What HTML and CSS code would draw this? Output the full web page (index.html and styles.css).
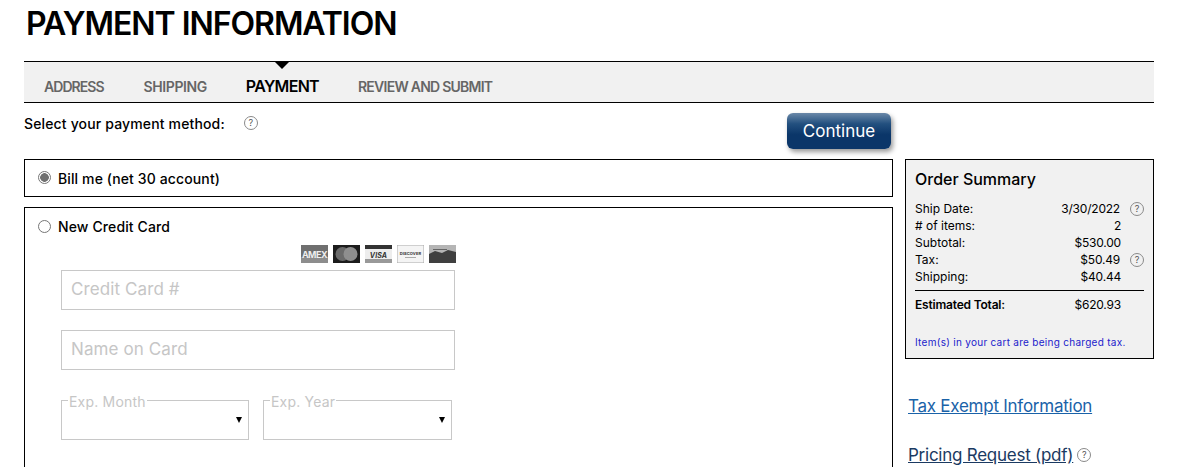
FILE: index.html
```html
<!DOCTYPE html>
<html>
<head>
    <meta charset="utf-8">
    <title>Payment Information</title>
    <link rel="stylesheet" href="styles.css">
</head>
<body>
    <div class="page">
        <h1 class="title">PAYMENT INFORMATION</h1>

        <ul class="steps">
            <li class="step step-address">ADDRESS</li>
            <li class="step step-shipping">SHIPPING</li>
            <li class="step step-current">PAYMENT</li>
            <li class="step step-review">REVIEW AND SUBMIT</li>
        </ul>

        <div class="method-row">
            <div class="method-label">
                <span>Select your payment method:</span>
                <span class="help">?</span>
            </div>
            <button class="continue" type="button">Continue</button>
        </div>

        <div class="columns">
            <div class="main">
                <label class="option option-bill">
                    <input class="radio" type="radio" name="method" checked>
                    <span class="bill-text">Bill me (net 30 account)</span>
                </label>

                <div class="option option-card">
                    <label class="card-head">
                        <input class="radio" type="radio" name="method">
                        <span>New Credit Card</span>
                    </label>

                    <div class="card-form">
                        <div class="card-logos">
                            <svg class="logo" viewBox="0 0 27 18">
                                <rect width="27" height="18" fill="#6f6f6f"/>
                                <rect y="12" width="27" height="6" fill="#8d8d8d"/>
                                <text x="13.5" y="12.5" class="logo-text amex">AMEX</text>
                            </svg>
                            <svg class="logo" viewBox="0 0 27 18">
                                <rect width="27" height="18" fill="#1c1c1c"/>
                                <circle cx="9.5" cy="9" r="7" fill="#6a6a6a"/>
                                <circle cx="17.5" cy="9" r="7" fill="#8e8e8e"/>
                            </svg>
                            <svg class="logo" viewBox="0 0 27 18">
                                <rect width="27" height="18" fill="#ededed"/>
                                <rect width="27" height="4" fill="#333"/>
                                <rect y="14" width="27" height="4" fill="#999"/>
                                <text x="13.5" y="12.5" class="logo-text visa">VISA</text>
                            </svg>
                            <svg class="logo" viewBox="0 0 27 18">
                                <rect width="27" height="18" fill="#f4f4f4" stroke="#aaa"/>
                                <text x="13.5" y="10" class="logo-text discover">DISCOVER</text>
                                <rect x="8" y="12" width="11" height="1" fill="#aaa"/>
                            </svg>
                            <svg class="logo" viewBox="0 0 27 18">
                                <rect width="27" height="18" fill="#3f3f3f"/>
                                <path d="M0 0h27v7l-8-2-6 3-7-2-6 3z" fill="#b5b5b5"/>
                                <rect x="4" y="4" width="14" height="1" fill="#666"/>
                            </svg>
                        </div>

                        <input class="field" type="text" placeholder="Credit Card #">
                        <input class="field" type="text" placeholder="Name on Card">

                        <div class="expiry">
                            <div class="select-box select-month">
                                <span class="select-label">Exp. Month</span>
                                <span class="select-arrow"></span>
                            </div>
                            <div class="select-box select-year">
                                <span class="select-label">Exp. Year</span>
                                <span class="select-arrow"></span>
                            </div>
                        </div>
                    </div>
                </div>
            </div>

            <div class="side">
                <div class="summary">
                    <h2 class="summary-title">Order Summary</h2>
                    <div class="summary-row"><span>Ship Date:</span><span class="amount">3/30/2022</span><span class="help">?</span></div>
                    <div class="summary-row"><span># of items:</span><span class="amount">2</span></div>
                    <div class="summary-row"><span>Subtotal:</span><span class="amount">$530.00</span></div>
                    <div class="summary-row"><span>Tax:</span><span class="amount">$50.49</span><span class="help">?</span></div>
                    <div class="summary-row"><span>Shipping:</span><span class="amount">$40.44</span></div>
                    <div class="summary-row summary-total"><span>Estimated Total:</span><span class="amount">$620.93</span></div>
                    <p class="summary-note">Item(s) in your cart are being charged tax.</p>
                </div>

                <a class="side-link tax-link" href="#">Tax Exempt Information</a>
                <div class="pricing">
                    <a class="side-link pricing-link" href="#">Pricing Request (pdf)</a>
                    <span class="help">?</span>
                </div>
            </div>
        </div>
    </div>
</body>
</html>
```

FILE: styles.css
```css
html, body {
    height: 467px;
    overflow: hidden;
}

body {
    margin: 0;
    background: #fff;
    color: #000;
    font-family: "Inter", "Liberation Sans", sans-serif;
}

.page {
    width: 1130px;
    margin-left: 24px;
}

.title {
    margin: 0;
    padding: 4px 0 0 2px;
    height: 61px;
    box-sizing: border-box;
    font-size: 32px;
    line-height: 40px;
    font-weight: 600;
    letter-spacing: -1.05px;
}

.steps {
    display: flex;
    align-items: center;
    gap: 39px;
    margin: 0;
    padding: 8px 0 0 20px;
    height: 32px;
    list-style: none;
    background: #f1f1f1;
    border-top: 1px solid #000;
    border-bottom: 1px solid #000;
}

.step {
    font-size: 14px;
    font-weight: 600;
    color: #666;
    letter-spacing: -0.4px;
    white-space: nowrap;
}

.step-address {
    margin-right: 1px;
    letter-spacing: -0.95px;
}

.step-review {
    letter-spacing: -0.75px;
}

.step-current {
    position: relative;
    font-size: 16px;
    color: #000;
    letter-spacing: -0.7px;
}

/* little marker hanging off the top rule */
.step-current::before {
    content: "";
    position: absolute;
    top: -14px;
    left: 50%;
    margin-left: -7px;
    border-left: 7px solid transparent;
    border-right: 7px solid transparent;
    border-top: 7px solid #000;
}

.method-row {
    display: flex;
    justify-content: space-between;
    align-items: flex-start;
    width: 867px;
    height: 56px;
    padding-top: 10px;
    box-sizing: border-box;
}

.method-label {
    display: flex;
    align-items: center;
    gap: 19px;
    font-size: 14px;
    font-weight: 500;
    letter-spacing: 0.15px;
    height: 20px;
}

.help {
    display: inline-block;
    flex: none;
    width: 12px;
    height: 12px;
    border: 1px solid #8a8a8a;
    border-radius: 50%;
    font-size: 9px;
    line-height: 12px;
    font-weight: 400;
    letter-spacing: 0;
    text-align: center;
    color: #555;
}

.continue {
    width: 104px;
    height: 36px;
    margin: 0;
    padding: 0;
    border: 0;
    border-radius: 6px;
    background: linear-gradient(#6a88a8 0%, #23507f 30%, #0b3669 60%, #0b3669 100%);
    box-shadow: 2px 3px 5px rgba(0, 0, 0, 0.4);
    color: #fff;
    font-family: inherit;
    font-size: 17px;
}

.columns {
    display: flex;
    gap: 12px;
    align-items: flex-start;
}

.main {
    width: 869px;
    flex: none;
}

.option {
    display: block;
    box-sizing: border-box;
    border: 1px solid #000;
    font-size: 14px;
    font-weight: 500;
    letter-spacing: 0.12px;
}

.option-bill {
    display: flex;
    align-items: center;
    height: 38px;
    margin-bottom: 10px;
    padding: 0 0 2px 13px;
}

.bill-text {
    padding-top: 2px;
}

.option-card {
    height: 260px;
    border-bottom: 0;
    padding: 9px 0 0 13px;
}

.card-head {
    display: flex;
    align-items: center;
    height: 18px;
}

.radio {
    appearance: none;
    width: 13px;
    height: 13px;
    margin: 0 7px 0 0;
    border: 1px solid #767676;
    border-radius: 50%;
    background: #fff;
}

.radio:checked {
    background: radial-gradient(circle, #707070 0 4px, #fff 4.6px);
}

.card-form {
    width: 394px;
    margin-left: 23px;
}

.card-logos {
    display: flex;
    justify-content: flex-end;
    gap: 5px;
    height: 18px;
    margin: 10px -1px 7px 0;
}

.logo {
    width: 27px;
    height: 18px;
}

.logo-text {
    text-anchor: middle;
    font-weight: 700;
}

.amex {
    font-size: 9px;
    fill: #eee;
    letter-spacing: -0.5px;
}

.visa {
    font-size: 7px;
    fill: #333;
    font-style: italic;
}

.discover {
    font-size: 4px;
    fill: #333;
}

.field {
    display: block;
    box-sizing: border-box;
    width: 394px;
    height: 40px;
    margin: 0 0 20px;
    padding: 0 9px 2px;
    border: 1px solid #c8c8c8;
    border-radius: 0;
    outline: 0;
    font-family: inherit;
    font-size: 17px;
    letter-spacing: 0.1px;
}

.field::placeholder {
    color: #c6c6c6;
    opacity: 1;
}

.expiry {
    display: flex;
    gap: 14px;
    margin-top: 30px;
}

.select-box {
    position: relative;
    box-sizing: border-box;
    height: 40px;
    border: 1px solid #c8c8c8;
}

.select-month {
    width: 188px;
}

.select-year {
    width: 189px;
}

.select-label {
    position: absolute;
    top: -7px;
    left: 6px;
    padding: 0 1px;
    background: #fff;
    color: #c6c6c6;
    font-size: 14px;
    line-height: 15px;
    font-weight: 400;
    letter-spacing: 0.2px;
}

.select-arrow {
    position: absolute;
    top: 16px;
    right: 6px;
    border-left: 3px solid transparent;
    border-right: 3px solid transparent;
    border-top: 6px solid #000;
}

.side {
    width: 249px;
    flex: none;
}

.summary {
    box-sizing: border-box;
    height: 200px;
    padding: 9px 9px 0;
    background: #f1f1f1;
    border: 1px solid #000;
    font-size: 12px;
}

.summary-title {
    margin: 0 0 11px;
    font-size: 16px;
    line-height: 20px;
    font-weight: 500;
}

.summary-row {
    display: flex;
    align-items: center;
    height: 17px;
    line-height: 17px;
}

.amount {
    width: 110px;
    margin-left: auto;
    margin-right: 23px;
    text-align: right;
    font-weight: 400;
    letter-spacing: -0.2px;
}

.summary-row .amount:not(:last-child) {
    margin-right: 10px;
}

.summary-total {
    height: 26px;
    margin-top: 5px;
    border-top: 1px solid #000;
    font-weight: 600;
    letter-spacing: -0.2px;
}

.summary-note {
    margin: 18px 0 0;
    color: #2222cc;
    font-size: 10px;
    line-height: 14px;
    letter-spacing: 0.28px;
}

.side-link {
    font-size: 17px;
    letter-spacing: -0.25px;
    text-decoration: underline;
}

.tax-link {
    display: block;
    margin: 37px 0 0 3px;
    line-height: 20px;
    color: #1a62a8;
}

.pricing {
    display: flex;
    align-items: center;
    gap: 4px;
    margin: 29px 0 0 3px;
    height: 20px;
}

.pricing-link {
    color: #1b3a62;
}
```
